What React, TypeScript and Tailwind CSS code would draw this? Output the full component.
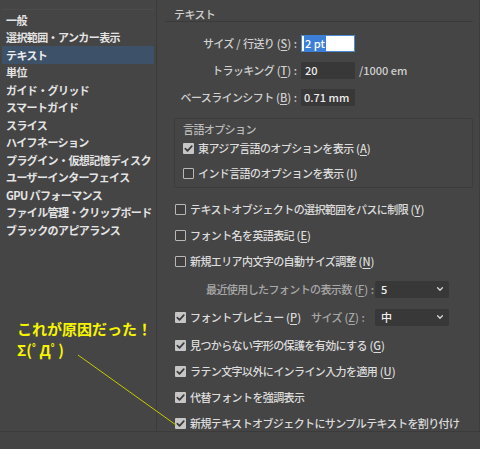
import type { ReactNode } from "react";

const font = { fontFamily: '"Noto Sans CJK JP", "Noto Sans", sans-serif' };

const sideItems = [
  "一般",
  "選択範囲・アンカー表示",
  "テキスト",
  "単位",
  "ガイド・グリッド",
  "スマートガイド",
  "スライス",
  "ハイフネーション",
  "プラグイン・仮想記憶ディスク",
  "ユーザーインターフェイス",
  "GPU パフォーマンス",
  "ファイル管理・クリップボード",
  "ブラックのアピアランス",
];

function Box({ checked }: { checked?: boolean }) {
  if (checked) {
    return (
      <span className="flex h-[11px] w-[11px] shrink-0 items-center justify-center rounded-[1px] bg-[#c6c6c6]">
        <svg viewBox="0 0 11 11" className="h-[11px] w-[11px]" fill="none" aria-hidden="true">
          <path d="M2.3 5.6 4.5 7.8 8.8 3.2" stroke="#3a3a3a" strokeWidth="1.7" strokeLinecap="round" strokeLinejoin="round" />
        </svg>
      </span>
    );
  }
  return <span className="h-[11px] w-[11px] shrink-0 rounded-[1px] border border-[#b8b8b8] bg-[#3f3f3f]" />;
}

function Key({ k, colon }: { k: string; colon?: boolean }) {
  return (
    <span className="tracking-normal">
      {" ("}
      <span className="underline underline-offset-2">{k}</span>
      {")"}
      {colon ? " : " : ""}
    </span>
  );
}

function Check({ checked, children }: { checked?: boolean; children: ReactNode }) {
  return (
    <div className="flex h-[26px] items-center gap-[4px]">
      <Box checked={checked} />
      <span className="whitespace-nowrap">{children}</span>
    </div>
  );
}

function Select({ value }: { value: string }) {
  return (
    <div className="flex h-[17px] w-[74px] items-center justify-between rounded-[2px] bg-[#383838] pl-[6px] pr-[5px] tracking-normal text-[#f0f0f0]">
      <span>{value}</span>
      <svg viewBox="0 0 10 10" className="h-[8px] w-[8px]" fill="none" aria-hidden="true">
        <path d="M2 3.5 5 6.5 8 3.5" stroke="#d8d8d8" strokeWidth="1.6" strokeLinecap="round" strokeLinejoin="round" />
      </svg>
    </div>
  );
}

export default function App() {
  return (
    <div
      className="relative flex h-[449px] w-[480px] flex-col overflow-hidden bg-[#454545] text-[11px] tracking-[-0.6px] text-[#dcdcdc]"
      style={font}
    >
      <div className="flex h-[432px] border-b border-[#3b3b3b]">
        {/* sidebar */}
        <div className="w-[157px] shrink-0 border-r border-[#3b3b3b] pt-[9px]">
          <div className="mx-[2px] border-t border-[#4c4c4c] pt-[1px]">
            {sideItems.map((item, i) => (
              <div
                key={item}
                className={
                  i === 2
                    ? "flex h-[17.5px] items-center bg-[#3d5269] pl-[4px] font-bold text-[#ececec]"
                    : "flex h-[17.5px] items-center pl-[4px] font-bold text-[#e4e4e4]"
                }
              >
                {item}
              </div>
            ))}
          </div>
        </div>

        {/* main */}
        <div className="flex-1 border-r border-[#3d3d3d] pr-[6px] font-medium">
          <div className="ml-[8px] h-[22px] border-b border-[#3a3a3a] pl-[9px] pt-[8px] leading-[12px] text-[#cfcfcf]">
            テキスト
          </div>

          <div className="mt-[13px] grid grid-cols-[140px_auto] items-center gap-x-[4px] gap-y-[10px]">
            <span className="whitespace-nowrap text-right text-[#d0d0d0]">
              サイズ<span className="tracking-normal"> / </span>行送り<Key k="S" colon />
            </span>
            <div className="flex h-[17px] w-[54px] items-center border border-[#4a8ad0] bg-white pl-[2px] tracking-normal">
              <span className="bg-[#3b7fd8] px-[1px] text-white">2 pt</span>
            </div>
            <span className="whitespace-nowrap text-right text-[#d0d0d0]">
              トラッキング<Key k="T" colon />
            </span>
            <div className="flex items-center gap-[4px] tracking-normal">
              <div className="flex h-[17px] w-[54px] items-center bg-[#383838] pl-[4px] text-[#eeeeee]">20</div>
              <span className="text-[#d0d0d0]">/1000 em</span>
            </div>
            <span className="whitespace-nowrap text-right text-[#d0d0d0]">
              ベースラインシフト<Key k="B" colon />
            </span>
            <div className="flex h-[17px] w-[54px] items-center bg-[#383838] pl-[3px] tracking-normal text-[#eeeeee]">
              0.71 mm
            </div>
          </div>

          <div className="ml-[17px] mt-[12px] h-[70px] rounded-[2px] border border-[#3c3c3c] pl-[8px] pt-[2px]">
            <div className="text-[#bcbcbc]">言語オプション</div>
            <div className="-mt-[2px]">
              <Check checked>
                東アジア言語のオプションを表示<Key k="A" />
              </Check>
              <div className="-mt-[1px]">
                <Check>
                  インド言語のオプションを表示<Key k="I" />
                </Check>
              </div>
            </div>
          </div>

          <div className="ml-[18px] mt-[8px]">
            <Check>
              テキストオブジェクトの選択範囲をパスに制限<Key k="Y" />
            </Check>
            <Check>
              フォント名を英語表記<Key k="E" />
            </Check>
            <Check>
              新規エリア内文字の自動サイズ調整<Key k="N" />
            </Check>
            <div className="flex h-[30px] items-center justify-end pr-[24px]">
              <span className="mr-[1px] whitespace-nowrap text-[#a8a8a8]">
                最近使用したフォントの表示数<Key k="F" colon />
              </span>
              <Select value="5" />
            </div>
            <div className="flex h-[26px] items-center pr-[24px]">
              <Box checked />
              <span className="ml-[4px] whitespace-nowrap">
                フォントプレビュー<Key k="P" />
              </span>
              <span className="ml-[10px] flex-1 whitespace-nowrap text-[#a8a8a8]">
                サイズ<Key k="Z" colon />
              </span>
              <Select value="中" />
            </div>
            <div className="mt-[2px]">
              <Check checked>
                見つからない字形の保護を有効にする<Key k="G" />
              </Check>
              <Check checked>
                ラテン文字以外にインライン入力を適用<Key k="U" />
              </Check>
              <Check checked>代替フォントを強調表示</Check>
              <Check checked>新規テキストオブジェクトにサンプルテキストを割り付け</Check>
            </div>
          </div>
        </div>
      </div>
      <div className="flex-1 bg-[#444444]" />

      {/* annotation overlay */}
      <div className="absolute left-[17px] top-[318px] text-[15px] font-bold leading-[21px] tracking-normal text-[#f5f500]">
        <div>これが原因だった！</div>
        <div>Σ(ﾟДﾟ)</div>
      </div>
      <svg className="pointer-events-none absolute left-0 top-0" width="480" height="449" aria-hidden="true">
        <line x1="78" y1="355" x2="176" y2="425" stroke="#c9c900" strokeWidth="1" />
      </svg>
    </div>
  );
}
